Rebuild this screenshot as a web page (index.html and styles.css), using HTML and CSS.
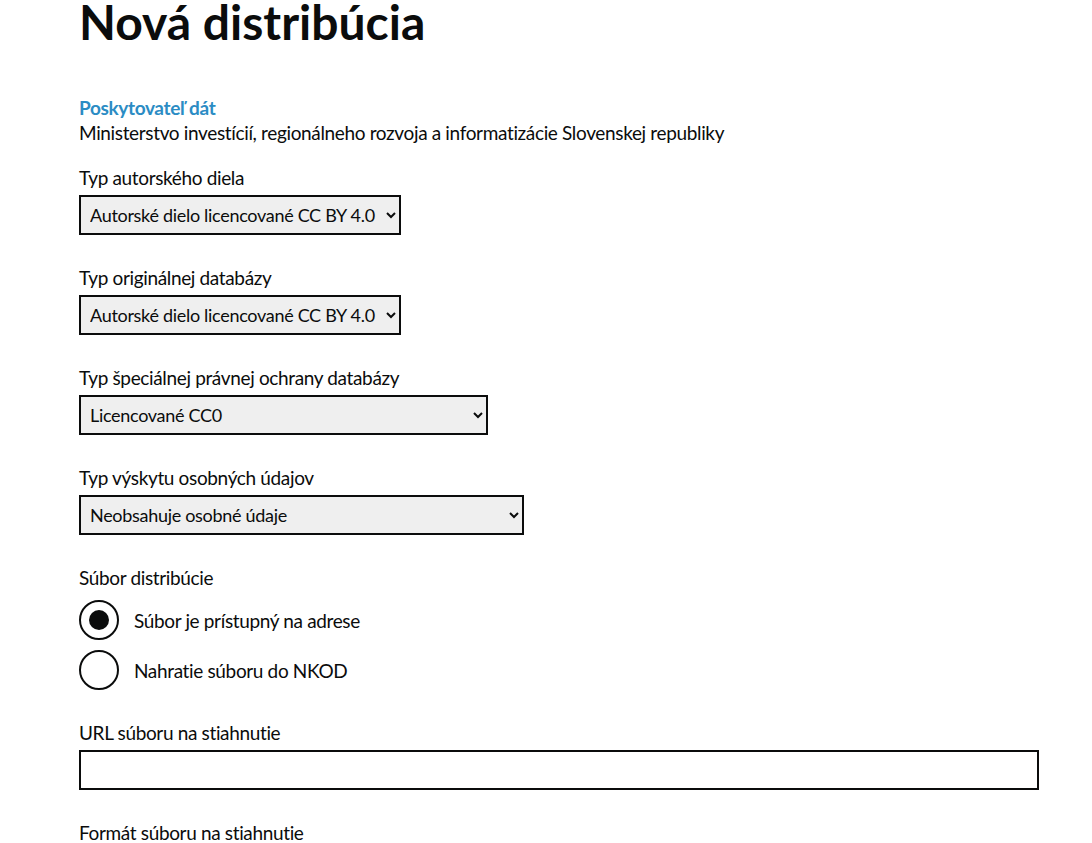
FILE: index.html
```html
<!DOCTYPE html>
<html lang="sk">
<head>
<meta charset="utf-8">
<title>Nová distribúcia</title>
<link rel="stylesheet" href="styles.css">
</head>
<body>
<main class="page">
  <h1 class="title">Nová distribúcia</h1>

  <div class="provider">
    <div class="provider-label">Poskytovateľ dát</div>
    <div class="provider-name">Ministerstvo investícií, regionálneho rozvoja a informatizácie Slovenskej republiky</div>
  </div>

  <div class="group">
    <label class="label" for="s1">Typ autorského diela</label>
    <select id="s1" class="select w1"><option>Autorské dielo licencované CC BY 4.0</option></select>
  </div>

  <div class="group">
    <label class="label" for="s2">Typ originálnej databázy</label>
    <select id="s2" class="select w1"><option>Autorské dielo licencované CC BY 4.0</option></select>
  </div>

  <div class="group">
    <label class="label" for="s3">Typ špeciálnej právnej ochrany databázy</label>
    <select id="s3" class="select w3"><option>Licencované CC0</option></select>
  </div>

  <div class="group">
    <label class="label" for="s4">Typ výskytu osobných údajov</label>
    <select id="s4" class="select w4"><option>Neobsahuje osobné údaje</option></select>
  </div>

  <fieldset class="group fieldset">
    <legend class="legend">Súbor distribúcie</legend>
    <div class="radio">
      <span class="radio-circle checked"></span>
      <span class="radio-text">Súbor je prístupný na adrese</span>
    </div>
    <div class="radio">
      <span class="radio-circle"></span>
      <span class="radio-text">Nahratie súboru do NKOD</span>
    </div>
  </fieldset>

  <div class="group">
    <label class="label" for="url">URL súboru na stiahnutie</label>
    <input id="url" class="input" type="text">
  </div>

  <div class="group">
    <label class="label">Formát súboru na stiahnutie</label>
  </div>
</main>
</body>
</html>
```
FILE: styles.css
```css
html, body {
  margin: 0;
  padding: 0;
  background: #ffffff;
}
body {
  font-family: Lato, "Noto Sans", sans-serif;
  color: #0b0c0c;
  font-size: 19px;
  line-height: 25px;
  letter-spacing: -0.35px;
}
.page {
  width: 960px;
  margin-left: 79px;
}
.title {
  font-size: 48px;
  line-height: 44px;
  font-weight: 700;
  letter-spacing: 0;
  margin: 0 0 51px 0;
}
.provider {
  margin-bottom: 20px;
}
.provider-label {
  color: #2b8cc4;
  font-weight: 700;
}
.group {
  margin-bottom: 30px;
}
.label, .legend {
  display: block;
  margin-bottom: 5px;
}
.select {
  display: block;
  height: 40px;
  border: 2px solid #0b0c0c;
  border-radius: 0;
  background: #efefef;
  color: #0b0c0c;
  font-family: inherit;
  font-size: 18px;
  letter-spacing: -0.3px;
  padding: 5px 2px 5px 5px;
  box-sizing: border-box;
}
.w1 { width: 322px; }
.w3 { width: 409px; }
.w4 { width: 445px; }
.fieldset {
  border: 0;
  padding: 0;
  margin: 0 0 30px 0;
  min-width: 0;
}
.legend {
  padding: 0;
  margin-bottom: 10px;
}
.radio {
  display: flex;
  align-items: center;
  height: 40px;
  margin-bottom: 10px;
}
.radio:last-child {
  margin-bottom: 0;
}
.radio-circle {
  position: relative;
  width: 40px;
  height: 40px;
  box-sizing: border-box;
  border: 2px solid #0b0c0c;
  border-radius: 50%;
  background: #fff;
  flex: none;
}
.radio-circle.checked::after {
  content: "";
  position: absolute;
  left: 8px;
  top: 8px;
  width: 20px;
  height: 20px;
  border-radius: 50%;
  background: #0b0c0c;
}
.radio-text {
  margin-left: 15px;
}
.input {
  display: block;
  width: 960px;
  height: 40px;
  box-sizing: border-box;
  border: 2px solid #0b0c0c;
  border-radius: 0;
  background: #fff;
  font-family: inherit;
  font-size: 19px;
  padding: 5px;
  margin: 0;
}
```
